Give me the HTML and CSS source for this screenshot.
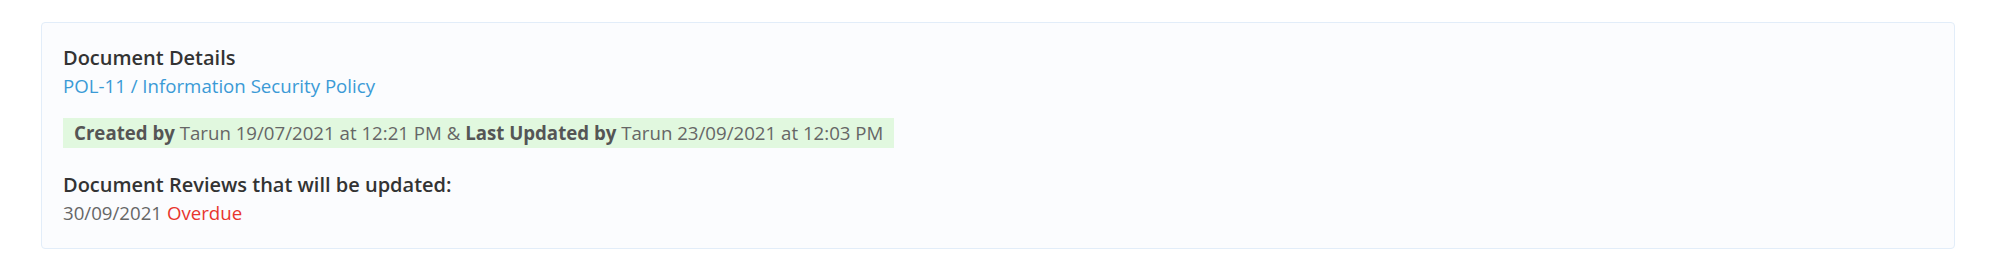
FILE: index.html
```html
<!DOCTYPE html>
<html lang="en">
<head>
<meta charset="utf-8">
<title>Document Details</title>
<link rel="stylesheet" href="styles.css">
</head>
<body>
<div class="page">
  <section class="card">
    <div class="block">
      <div class="title">Document Details</div>
      <a class="doc-link" href="#">POL-11 / Information Security Policy</a>
    </div>
    <div class="audit">
      <b>Created by</b> Tarun 19/07/2021 at 12:21 PM &amp; <b>Last Updated by</b> Tarun 23/09/2021 at 12:03 PM
    </div>
    <div class="block">
      <div class="title">Document Reviews that will be updated:</div>
      <div class="review">30/09/2021 <span class="overdue">Overdue</span></div>
    </div>
  </section>
</div>
</body>
</html>
```
FILE: styles.css
```css
html, body {
  margin: 0;
  padding: 0;
  background: #ffffff;
}
body {
  font-family: "Open Sans", "Liberation Sans", sans-serif;
  font-size: 18.67px;
  line-height: 26.67px;
  color: #666;
}
.page {
  padding: 22px 44px 26px 41px;
}
.card {
  background: #fbfcfe;
  border: 1px solid #e2edf9;
  border-radius: 4px;
  padding: 21px 21px 21.6px 21px;
  display: flex;
  flex-direction: column;
  align-items: flex-start;
}
.block {
  display: flex;
  flex-direction: column;
}
.title {
  font-size: 20px;
  line-height: 28.57px;
  font-weight: 600;
  color: #333;
}
.doc-link {
  color: #3a9ad6;
  text-decoration: none;
}
.audit {
  margin-top: 18.5px;
  margin-bottom: 22.8px;
  background: #e1f8df;
  padding: 2px 11px;
  color: #666;
}
.audit b {
  font-weight: 700;
  color: #555;
}
.review {
  color: #666;
}
.overdue {
  color: #e8352e;
}
```
